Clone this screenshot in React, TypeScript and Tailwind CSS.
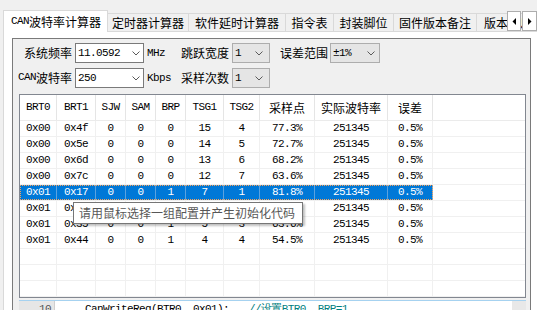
import React from "react";

const CJK = "font-['Noto_Sans_CJK_SC',sans-serif]";
const MONO = "font-['Liberation_Mono',monospace] text-[11px] tracking-[-0.6px]";

function Chevron() {
  return (
    <svg width="8" height="5" viewBox="0 0 8 5" className="block">
      <polyline points="0.5,0.5 4,4 7.5,0.5" fill="none" stroke="#5a5a5a" strokeWidth="1" />
    </svg>
  );
}

function Combo({ value, cls, gray, chevronCls }: { value: React.ReactNode; cls: string; gray?: boolean; chevronCls: string }) {
  return (
    <div
      className={
        "h-[20px] flex items-center justify-between border " +
        (gray ? "bg-[#e5e5e5] border-[#adadad] " : "bg-white border-[#7a7a7a] ") +
        cls
      }
    >
      <span className={MONO + " pl-[2px] text-black leading-none"}>{value}</span>
      <span className={chevronCls}>
        <Chevron />
      </span>
    </div>
  );
}

const cols = [
  { w: "w-[37px]", align: "justify-start pl-[6px]" },
  { w: "w-[39px]", align: "justify-start pl-[7px]" },
  { w: "w-[30px]", align: "justify-center" },
  { w: "w-[30px]", align: "justify-center" },
  { w: "w-[30px]", align: "justify-center" },
  { w: "w-[38px]", align: "justify-center" },
  { w: "w-[36px]", align: "justify-center" },
  { w: "w-[55px]", align: "justify-center" },
  { w: "w-[73px]", align: "justify-center" },
  { w: "w-[45px]", align: "justify-center" },
];

const headers: { t: string; cjk?: boolean }[] = [
  { t: "BRT0" },
  { t: "BRT1" },
  { t: "SJW" },
  { t: "SAM" },
  { t: "BRP" },
  { t: "TSG1" },
  { t: "TSG2" },
  { t: "采样点", cjk: true },
  { t: "实际波特率", cjk: true },
  { t: "误差", cjk: true },
];

const rows: string[][] = [
  ["0x00", "0x4f", "0", "0", "0", "15", "4", "77.3%", "251345", "0.5%"],
  ["0x00", "0x5e", "0", "0", "0", "14", "5", "72.7%", "251345", "0.5%"],
  ["0x00", "0x6d", "0", "0", "0", "13", "6", "68.2%", "251345", "0.5%"],
  ["0x00", "0x7c", "0", "0", "0", "12", "7", "63.6%", "251345", "0.5%"],
  ["0x01", "0x17", "0", "0", "1", "7", "1", "81.8%", "251345", "0.5%"],
  ["0x01", "0x26", "0", "0", "1", "6", "2", "72.7%", "251345", "0.5%"],
  ["0x01", "0x35", "0", "0", "1", "5", "3", "63.6%", "251345", "0.5%"],
  ["0x01", "0x44", "0", "0", "1", "4", "4", "54.5%", "251345", "0.5%"],
  [],
  [],
  [],
];

const tabs: { label: React.ReactNode; w: string }[] = [
  { label: "定时器计算器", w: "w-[81px]" },
  { label: "软件延时计算器", w: "w-[97px]" },
  { label: "指令表", w: "w-[48px]" },
  { label: "封装脚位", w: "w-[60px]" },
  { label: "固件版本备注", w: "w-[83px]" },
  { label: "版本信息", w: "w-[60px]" },
];

export default function App() {
  return (
    <div className={"relative w-[537px] h-[310px] overflow-hidden bg-[#f0f0f0] text-black " + CJK}>
      {/* Tab strip */}
      <div className="flex items-end h-[31px] pl-[3px]">
        <div className="relative z-10 -mb-px h-[22px] w-[106px] flex items-center pl-[7px] bg-white border-t border-l border-r border-[#d9d9d9] text-[12px] leading-none whitespace-nowrap">
          <span className={MONO}>CAN</span>
          <span>波特率计算器</span>
        </div>
        {tabs.map((t, i) => (
          <div
            key={i}
            className={
              "h-[18px] flex items-center justify-center border-t border-r border-[#d9d9d9] bg-[#f0f0f0] text-[12px] leading-none whitespace-nowrap overflow-hidden shrink-0 " +
              t.w
            }
          >
            {i === 5 ? <span className="pl-[7px] w-full">{t.label}</span> : t.label}
          </div>
        ))}
      </div>

      {/* Tab scroll arrows */}
      <div className="absolute left-[507px] top-[11px] flex gap-px">
        <div className="w-[14px] h-[20px] bg-white border border-[#adadad] flex items-center justify-center">
          <svg width="4" height="7" viewBox="0 0 4 7"><polygon points="4,0 4,7 0.5,3.5" fill="#000" /></svg>
        </div>
        <div className="w-[15px] h-[20px] bg-white border border-[#adadad] flex items-center justify-center">
          <svg width="4" height="7" viewBox="0 0 4 7"><polygon points="0,0 0,7 3.5,3.5" fill="#000" /></svg>
        </div>
      </div>

      {/* Tab page */}
      <div className="ml-[3px] h-[279px] bg-white border-t border-l border-[#d9d9d9] pt-[6px] pl-[8px]">
        <div className="w-[519px] h-[300px] bg-[#f0f0f0] border border-[#7a7a7a] pt-[4px]">
          {/* Row 1 */}
          <div className="flex items-center h-[20px] text-[12px] leading-none">
            <div className="w-[59px] text-right whitespace-nowrap">系统频率</div>
            <Combo value="11.0592" cls="ml-[3px] w-[69px]" chevronCls="pr-[3px]" />
            <div className={MONO + " ml-[3px] w-[34px]"}>MHz</div>
            <div className="w-[47px] whitespace-nowrap">跳跃宽度</div>
            <Combo value="1" gray cls="ml-[4px] w-[38px]" chevronCls="pr-[6px]" />
            <div className="ml-[10px] w-[47px] whitespace-nowrap">误差范围</div>
            <Combo value="±1%" gray cls="ml-[3px] w-[50px]" chevronCls="pr-[4px]" />
          </div>
          {/* Row 2 */}
          <div className="flex items-center h-[20px] mt-[5px] text-[12px] leading-none">
            <div className="w-[59px] flex justify-end whitespace-nowrap">
              <span className={MONO}>CAN</span>
              <span>波特率</span>
            </div>
            <Combo value="250" cls="ml-[3px] w-[69px]" chevronCls="pr-[3px]" />
            <div className={MONO + " ml-[3px] w-[34px]"}>Kbps</div>
            <div className="w-[47px] whitespace-nowrap">采样次数</div>
            <Combo value="1" gray cls="ml-[4px] w-[38px]" chevronCls="pr-[6px]" />
          </div>

          {/* Grid */}
          <div className="ml-[6px] mt-[6px] w-[507px] h-[204px] bg-white border border-[#828790] overflow-hidden">
            <div className="flex h-[26px] border-b border-[#ebebeb]">
              {headers.map((h, i) => (
                <div
                  key={i}
                  className={"flex items-center border-r border-[#e5e5e5] shrink-0 " + cols[i].w + " " + cols[i].align}
                >
                  <span className={h.cjk ? "text-[12px] leading-none" : MONO + " leading-none"}>{h.t}</span>
                </div>
              ))}
              <div className="flex-1" />
            </div>
            {rows.map((r, ri) => {
              const sel = ri === 4;
              return (
                <div key={ri} className="flex h-[16px] border-b border-[#f0f0f0]">
                  <div
                    className={
                      "flex shrink-0 " +
                      (sel ? "bg-[#0078d7] text-white outline outline-1 outline-dotted outline-[#f7a35c] -outline-offset-1" : "")
                    }
                  >
                    {cols.map((c, ci) => (
                      <div
                        key={ci}
                        className={
                          "flex items-center shrink-0 border-r " +
                          (sel ? "border-[#5aa2e0] " : "border-[#f0f0f0] ") +
                          c.w +
                          " " +
                          c.align
                        }
                      >
                        <span className={MONO + " leading-none"}>{r[ci] ?? ""}</span>
                      </div>
                    ))}
                  </div>
                  <div className="flex-1" />
                </div>
              );
            })}
          </div>

          {/* Code editor strip */}
          <div className="ml-[6px] mt-[2px] w-[507px] border-t border-[#a6d2f0] flex h-[20px] bg-white">
            <div className="w-[36px] bg-[#e6e6e6] border-r border-[#cfcfcf] pl-[20px] pt-[3px]">
              <span className={MONO + " block text-[#555] leading-[11px]"}>10</span>
            </div>
            <div className="flex-1 flex pl-[30px] pt-[3px] whitespace-nowrap">
              <span className={MONO + " block leading-[11px]"}>CanWriteReg(BTR0, 0x01);</span>
              <span className={MONO + " block leading-[11px] text-[#008080] ml-[20px]"}>//设置BTR0, BRP=1</span>
            </div>
            <div className="w-[14px] bg-[#e8e8e8]" />
          </div>
        </div>
      </div>

      {/* Tooltip */}
      <div className="absolute left-[73px] top-[202px] w-[230px] h-[22px] bg-white border border-[#767676] shadow-[2px_2px_2px_rgba(0,0,0,0.25)] flex items-center pl-[5px] text-[12px] text-[#575757] leading-none whitespace-nowrap">
        请用鼠标选择一组配置并产生初始化代码
      </div>
    </div>
  );
}
